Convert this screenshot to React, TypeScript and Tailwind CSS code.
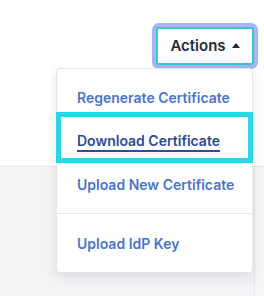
import React from "react";

export default function App() {
  return (
    <div
      className="relative w-[264px] h-[296px] overflow-hidden bg-white"
      style={{ fontFamily: "Inter, 'Noto Sans', sans-serif" }}
    >
      {/* top bar */}
      <div className="h-[167px] bg-white border-b border-[#e5e7eb] flex justify-end items-start pt-[27px] pr-[10px]">
        <button className="w-[98px] h-[38px] flex items-center justify-center gap-[6px] bg-white border-2 border-[#3cc9b9] rounded-[3px] ring-4 ring-[#a5b4fc] text-[15px] font-semibold text-[#1f2937]">
          <span>Actions</span>
          <svg width="8" height="5" viewBox="0 0 8 5" className="mt-[-1px]">
            <path d="M0 5 L4 0 L8 5 Z" fill="#1f2937" />
          </svg>
        </button>
      </div>

      {/* page body */}
      <div className="h-[129px] bg-[#f3f4f6] flex">
        <div className="flex-1" />
        <div className="w-[10px] border-l border-[#e5e7eb] bg-[#f5f6f8]" />
      </div>

      {/* dropdown */}
      <div className="absolute left-[56px] top-[68px] w-[197px] h-[205px] bg-white rounded-[4px] border border-[#e5e7eb] shadow-[0_4px_12px_rgba(0,0,0,0.1)] flex flex-col pt-[9px] text-[14px] font-semibold text-[#4a74cf] whitespace-nowrap">
        <div className="h-[39px] mx-1 px-4 flex items-center">
          Regenerate Certificate
        </div>
        <div className="h-[41px] mx-1 px-4 flex items-center pt-[7px] outline-[5px] outline-solid outline-[#2ad7e6] text-[#2b4c99]">
          <span className="underline underline-offset-[4px] decoration-[1.5px]">
            Download Certificate
          </span>
        </div>
        <div className="h-[54px] mx-1 px-4 flex items-center">
          Upload New Certificate
        </div>
        <div className="border-t border-[#e5e7eb] mt-[2px]" />
        <div className="h-[58px] mx-1 px-4 flex items-center">Upload IdP Key</div>
      </div>
    </div>
  );
}
